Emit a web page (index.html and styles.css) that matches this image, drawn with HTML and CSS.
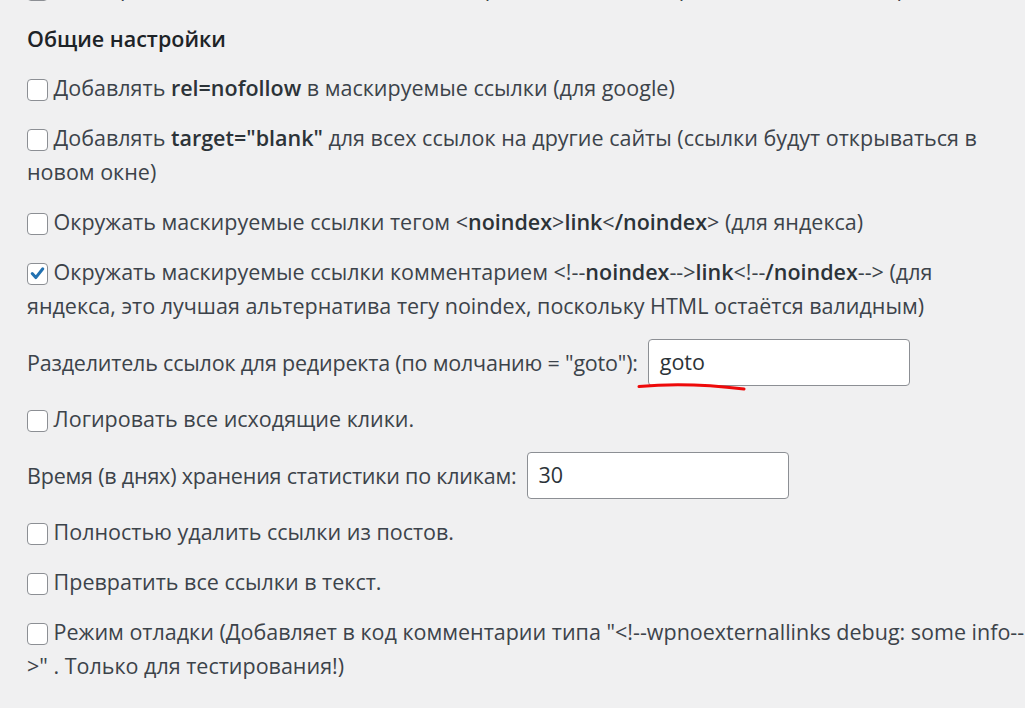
FILE: index.html
```html
<!DOCTYPE html>
<html lang="ru">
<head>
<meta charset="utf-8">
<title>Общие настройки</title>
<link rel="stylesheet" href="styles.css">
</head>
<body>
<div class="wrap">
  <p class="opt"><span class="cb"></span> Маскировать ссылки в тексте записей, страниц и комментариях для поисковых роботов</p>
  <h2 class="title">Общие настройки</h2>
  <p class="opt"><span class="cb"></span> Добавлять <b>rel=nofollow</b> в маскируемые ссылки (для google)</p>
  <p class="opt"><span class="cb"></span> Добавлять <b>target="blank"</b> для всех ссылок на другие сайты (ссылки будут открываться в<br>новом окне)</p>
  <p class="opt"><span class="cb"></span> Окружать маскируемые ссылки тегом &lt;<b>noindex</b>&gt;<b>link</b>&lt;<b>/noindex</b>&gt; (для яндекса)</p>
  <p class="opt"><span class="cb checked"><svg viewBox="0 0 21 21" width="21" height="21"><path d="M5.2 10.6 L8.8 14.6 L15.8 5.8" fill="none" stroke="#2271b1" stroke-width="3" stroke-linecap="round" stroke-linejoin="round"/></svg></span> Окружать маскируемые ссылки комментарием &lt;!--<b>noindex</b>--&gt;<b>link</b>&lt;!--<b>/noindex</b>--&gt; (для<br>яндекса, это лучшая альтернатива тегу noindex, поскольку HTML остаётся валидным)</p>
  <div class="field">
    <span class="label">Разделитель ссылок для редиректа (по молчанию = "goto"):</span>
    <span class="inputbox">goto
      <svg class="mark" viewBox="0 0 110 12" width="110" height="12"><path d="M2 5.5 Q 50 1 107 8" fill="none" stroke="#ee0a0a" stroke-width="3" stroke-linecap="round"/></svg>
    </span>
  </div>
  <p class="opt"><span class="cb"></span> Логировать все исходящие клики.</p>
  <div class="field">
    <span class="label">Время (в днях) хранения статистики по кликам:</span>
    <span class="inputbox">30</span>
  </div>
  <p class="opt"><span class="cb"></span> Полностью удалить ссылки из постов.</p>
  <p class="opt"><span class="cb"></span> Превратить все ссылки в текст.</p>
  <p class="opt"><span class="cb"></span> Режим отладки (Добавляет в код комментарии типа "&lt;!--wpnoexternallinks debug: some info--<br>&gt;" . Только для тестирования!)</p>
</div>
</body>
</html>
```

FILE: styles.css
```css
html, body {
  margin: 0;
  padding: 0;
  background: #f0f0f1;
  overflow: hidden;
}
body {
  font-family: "Open Sans", "Noto Sans", "Liberation Sans", sans-serif;
  font-size: 21.5px;
  color: #3c434a;
}
.wrap {
  display: flex;
  flex-direction: column;
  gap: 16px;
  margin-top: -29px;
  padding-left: 27px;
  width: 1000px;
}
.opt, .title {
  margin: 0;
  line-height: 34px;
  white-space: nowrap;
}
.title {
  font-size: 21.5px;
  font-weight: 600;
  color: #1d2327;
  margin-top: 1px;
  margin-bottom: -1px;
}
b {
  font-weight: 600;
  color: #2c3338;
}
.cb {
  display: inline-block;
  box-sizing: border-box;
  width: 21px;
  height: 22px;
  border: 1px solid #8c8f94;
  border-radius: 4px;
  background: #fff;
  vertical-align: -5px;
  position: relative;
}
.cb svg {
  position: absolute;
  left: -1px;
  top: -1px;
}
.field {
  display: flex;
  align-items: center;
  gap: 10px;
  height: 47px;
  line-height: 34px;
}
.label {
  letter-spacing: -0.2px;
}
.inputbox {
  position: relative;
  box-sizing: border-box;
  width: 262px;
  height: 47px;
  background: #fff;
  border: 1px solid #8c8f94;
  border-radius: 4px;
  padding-left: 11px;
  line-height: 44px;
  color: #2c3338;
}
.mark {
  position: absolute;
  left: -12px;
  top: 41px;
}
```
